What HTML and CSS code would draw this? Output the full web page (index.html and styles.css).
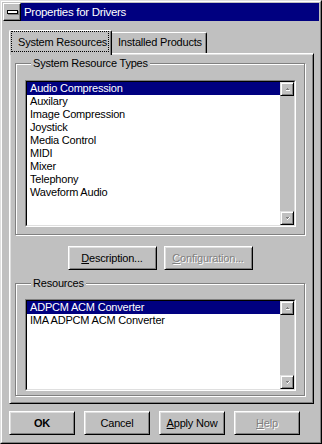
FILE: index.html
```html
<!DOCTYPE html>
<html>
<head>
<meta charset="utf-8">
<link rel="stylesheet" href="styles.css">
</head>
<body>
<div class="window">
  <div class="window-inner">
    <div class="titlebar">
      <div class="sysmenu"><span class="sysbar"></span></div>
      <span class="title">Properties for Drivers</span>
    </div>
    <div class="content">
      <div class="tabs">
        <div class="tab active"><span class="focus">System Resources</span></div>
        <div class="tab">Installed Products</div>
      </div>
      <div class="panel">
        <div class="group group-types">
          <div class="group-label">System Resource Types</div>
          <div class="listbox list-types">
            <div class="listbox-inner">
              <ul class="items">
                <li class="selected">Audio Compression</li>
                <li>Auxilary</li>
                <li>Image Compression</li>
                <li>Joystick</li>
                <li>Media Control</li>
                <li>MIDI</li>
                <li>Mixer</li>
                <li>Telephony</li>
                <li>Waveform Audio</li>
              </ul>
              <div class="scrollbar">
                <div class="sbtn"><svg width="7" height="5" viewBox="0 0 7 5"><path d="M3 1h1v1h1v1H2V2h1z" fill="#808080"/><path d="M2 3h4v1H2z" fill="#fff"/></svg></div>
                <div class="sbtn"><svg width="7" height="5" viewBox="0 0 7 5"><path d="M2 1h3v1H4v1H3V2H2z" fill="#808080"/><path d="M5 1h1v1H5zM4 2h1v1H4zM3 3h1v1H3z" fill="#fff"/></svg></div>
              </div>
            </div>
          </div>
        </div>
        <div class="btnrow">
          <div class="btn wide"><span><u>D</u>escription...</span></div>
          <div class="btn wide disabled"><span><u>C</u>onfiguration...</span></div>
        </div>
        <div class="group group-res">
          <div class="group-label">Resources</div>
          <div class="listbox list-res">
            <div class="listbox-inner">
              <ul class="items">
                <li class="selected">ADPCM ACM Converter</li>
                <li>IMA ADPCM ACM Converter</li>
              </ul>
              <div class="scrollbar">
                <div class="sbtn"><svg width="7" height="5" viewBox="0 0 7 5"><path d="M3 1h1v1h1v1H2V2h1z" fill="#808080"/><path d="M2 3h4v1H2z" fill="#fff"/></svg></div>
                <div class="sbtn"><svg width="7" height="5" viewBox="0 0 7 5"><path d="M2 1h3v1H4v1H3V2H2z" fill="#808080"/><path d="M5 1h1v1H5zM4 2h1v1H4zM3 3h1v1H3z" fill="#fff"/></svg></div>
              </div>
            </div>
          </div>
        </div>
      </div>
      <div class="footer">
        <div class="btn"><span class="bold">OK</span></div>
        <div class="btn"><span>Cancel</span></div>
        <div class="btn"><span><u>A</u>pply Now</span></div>
        <div class="btn disabled"><span><u>H</u>elp</span></div>
      </div>
    </div>
  </div>
</div>
</body>
</html>
```

FILE: styles.css
```css
* { box-sizing: border-box; }
html, body { margin: 0; padding: 0; }
body {
  background: #c0c0c0;
  font-family: "Liberation Sans", Arial, sans-serif;
  font-size: 11px;
  letter-spacing: -0.2px;
  color: #000;
}
.window {
  width: 322px;
  height: 444px;
  border: 1px solid;
  border-color: #dfdfdf #000 #000 #dfdfdf;
  background: #c0c0c0;
  display: flex;
  flex-direction: column;
}
.window-inner {
  flex: 1;
  border: 1px solid;
  border-color: #fff #808080 #808080 #fff;
  padding: 1px;
  display: flex;
  flex-direction: column;
}
.titlebar {
  height: 18px;
  display: flex;
  align-items: center;
  background: #000080;
  color: #fff;
}
.sysmenu {
  width: 18px;
  height: 18px;
  background: #c0c0c0;
  border: 1px solid;
  border-color: #fff #000 #000 #fff;
  box-shadow: inset -1px -1px #808080;
  display: flex;
  align-items: center;
  justify-content: center;
}
.sysbar {
  width: 11px;
  height: 4px;
  background: #fff;
  border: 1px solid #000;
  box-shadow: 1px 1px 0 #808080;
  margin-top: -1px;
}
.title {
  margin-left: 3px;
  font-size: 11.5px;
  letter-spacing: -0.3px;
  line-height: 18px;
}
.content {
  flex: 1;
  padding: 9px 5px 0 6px;
  display: flex;
  flex-direction: column;
}
.tabs {
  display: flex;
  align-items: flex-end;
  height: 23px;
}
.tab {
  height: 21px;
  width: 95px;
  border-top: 1px solid #fff;
  border-right: 1px solid #000;
  box-shadow: inset -1px 0 #808080;
  border-top-right-radius: 2px;
  padding-left: 6px;
  line-height: 19px;
  white-space: nowrap;
}
.tab.active {
  position: relative;
  z-index: 1;
  width: 103px;
  height: 25px;
  margin-bottom: -2px;
  background: #c0c0c0;
  border-left: 1px solid #fff;
  border-top-left-radius: 2px;
  padding: 0 2px 2px 1px;
  line-height: normal;
}
.focus {
  display: flex;
  align-items: center;
  height: 21px;
  border: 1px dotted #000;
  padding-left: 6px;
}
.panel {
  height: 351px;
  border: 1px solid;
  border-color: #fff #000 #000 #fff;
  box-shadow: inset 1px 1px #dfdfdf, inset -1px -1px #808080;
  padding: 0 8px 0 5px;
  display: flex;
  flex-direction: column;
}
.group {
  border: 1px solid #808080;
  box-shadow: inset 1px 1px #fff, 1px 1px #fff;
  padding: 0 8px 0 9px;
}
.group-types { margin-top: 9px; padding-bottom: 7px; }
.group-res { margin-top: 13px; padding-bottom: 4px; }
.group-label {
  width: max-content;
  margin: -7px 0 0 6px;
  padding: 0 2px;
  background: #c0c0c0;
  line-height: 13px;
}
.listbox {
  border: 1px solid;
  border-color: #808080 #fff #fff #808080;
}
.list-types { margin-top: 10px; height: 147px; }
.list-res { margin-top: 9px; height: 92px; }
.listbox-inner {
  height: 100%;
  border: 1px solid;
  border-color: #000 #dfdfdf #dfdfdf #000;
  background: #fff;
  display: flex;
}
.items {
  flex: 1;
  margin: 0;
  padding: 0;
  list-style: none;
}
.items li {
  height: 13px;
  line-height: 13px;
  padding-left: 3px;
  white-space: nowrap;
}
.items li.selected {
  background: #000080;
  color: #fff;
}
.scrollbar {
  width: 14px;
  background: #c0c0c0;
  display: flex;
  flex-direction: column;
  justify-content: space-between;
}
.sbtn {
  width: 14px;
  height: 14px;
  border: 1px solid;
  border-color: #dfdfdf #000 #000 #dfdfdf;
  box-shadow: inset 1px 1px #fff, inset -1px -1px #808080;
  display: flex;
  align-items: center;
  justify-content: center;
}
.sbtn svg { display: block; }
.btnrow {
  margin-top: 11px;
  display: flex;
  justify-content: center;
  gap: 7px;
}
.btn {
  width: 66px;
  height: 24px;
  border: 1px solid;
  border-color: #fff #000 #000 #fff;
  box-shadow: inset 1px 1px #dfdfdf, inset -1px -1px #808080;
  display: flex;
  align-items: center;
  justify-content: center;
  white-space: nowrap;
}
.btn.wide { width: 89px; }
.btn.disabled {
  color: #808080;
  text-shadow: 1px 1px 0 #fff;
}
.bold { font-weight: bold; }
.footer {
  margin-top: 7px;
  display: flex;
  gap: 9px;
}
```
